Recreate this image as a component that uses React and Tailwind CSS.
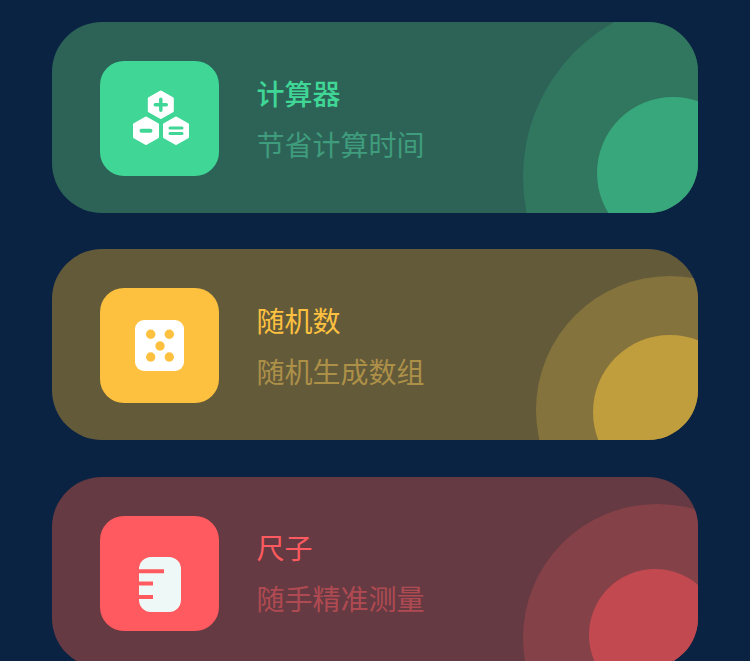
const cards = [
  {
    title: "计算器",
    sub: "节省计算时间",
    card: "bg-[#2d6357]",
    tile: "bg-[#3fd696]",
    titleColor: "text-[#3fd696] font-medium",
    subColor: "text-[#3f9c7c]",
    outer: "bg-[#31775f] left-[471px] top-[-22px] w-[354px] h-[354px]",
    inner: "bg-[#38a77c] left-[545px] top-[75px] w-[152px] h-[152px]",
    icon: <CalcIcon />,
  },
  {
    title: "随机数",
    sub: "随机生成数组",
    card: "bg-[#635a3a]",
    tile: "bg-[#fdc13f]",
    titleColor: "text-[#fdc13f]",
    subColor: "text-[#ad9048]",
    outer: "bg-[#85733d] left-[484px] top-[27px] w-[268px] h-[268px]",
    inner: "bg-[#c09e3e] left-[541px] top-[86px] w-[154px] h-[154px]",
    icon: <DiceIcon />,
  },
  {
    title: "尺子",
    sub: "随手精准测量",
    card: "bg-[#663a42]",
    tile: "bg-[#ff5a60]",
    titleColor: "text-[#ff5a60]",
    subColor: "text-[#b04a52]",
    outer: "bg-[#854148] left-[471px] top-[27px] w-[268px] h-[268px]",
    inner: "bg-[#c24950] left-[537px] top-[92px] w-[132px] h-[132px]",
    icon: <RulerIcon />,
  },
];

function CalcIcon() {
  return (
    <svg width="58" height="58" viewBox="0 0 58 58">
      <g fill="#fff" stroke="#fff" strokeWidth="3" strokeLinejoin="round">
        <polygon points="29.800,2 41.300,8.500 41.300,21 29.800,27.500 18.300,21 18.300,8.500" />
        <polygon points="15,28 26.500,34.500 26.500,47 15,53.500 3.500,47 3.500,34.500" />
        <polygon points="45,28 56.500,34.500 56.500,47 45,53.500 33.500,47 33.500,34.500" />
      </g>
      <g stroke="#3fd696" fill="none">
        <path d="M24.300 14.800h11M29.800 9.300v11" strokeWidth="3.500" strokeLinecap="round" />
        <path d="M10.500 40.800h9" strokeWidth="4" strokeLinecap="round" />
        <path d="M39 38h12M39 43.500h12" strokeWidth="3" strokeLinecap="round" />
      </g>
    </svg>
  );
}

function DiceIcon() {
  return (
    <svg width="49" height="51" viewBox="0 0 49 51">
      <rect width="49" height="51" rx="9" fill="#fff" />
      <g fill="#fdc13f">
        <circle cx="15.700" cy="14.300" r="4.700" />
        <circle cx="34.300" cy="14.300" r="4.700" />
        <circle cx="25" cy="26" r="4.700" />
        <circle cx="15.700" cy="37" r="4.700" />
        <circle cx="34.300" cy="37" r="4.700" />
      </g>
    </svg>
  );
}

function RulerIcon() {
  return (
    <svg className="mt-[22px]" width="42" height="55" viewBox="0 0 42 55">
      <rect width="42" height="55" rx="12" fill="#eef8f7" />
      <path d="M0 14.300h25M0 26.600h14M0 40h14" stroke="#ff5a60" strokeWidth="4" />
    </svg>
  );
}

export default function App() {
  return (
    <div className="h-[661px] overflow-hidden bg-[#0b2343] px-[52px] pt-[22px] flex flex-col gap-[36.400px] font-['Noto_Sans_CJK_SC','Noto_Sans',sans-serif]">
      {cards.map((c) => (
        <div key={c.title} className={`relative shrink-0 h-[191px] rounded-[50px] overflow-hidden flex items-center pl-[48px] pt-[2px] gap-[37.500px] ${c.card}`}>
          <div className={`absolute rounded-full ${c.outer}`} />
          <div className={`absolute rounded-full ${c.inner}`} />
          <div className={`relative w-[119px] h-[115px] rounded-[24px] flex items-center justify-center ${c.tile}`}>
            {c.icon}
          </div>
          <div className="relative flex flex-col gap-[10px] text-[28px] leading-[41px]">
            <span className={c.titleColor}>{c.title}</span>
            <span className={c.subColor}>{c.sub}</span>
          </div>
        </div>
      ))}
    </div>
  );
}
